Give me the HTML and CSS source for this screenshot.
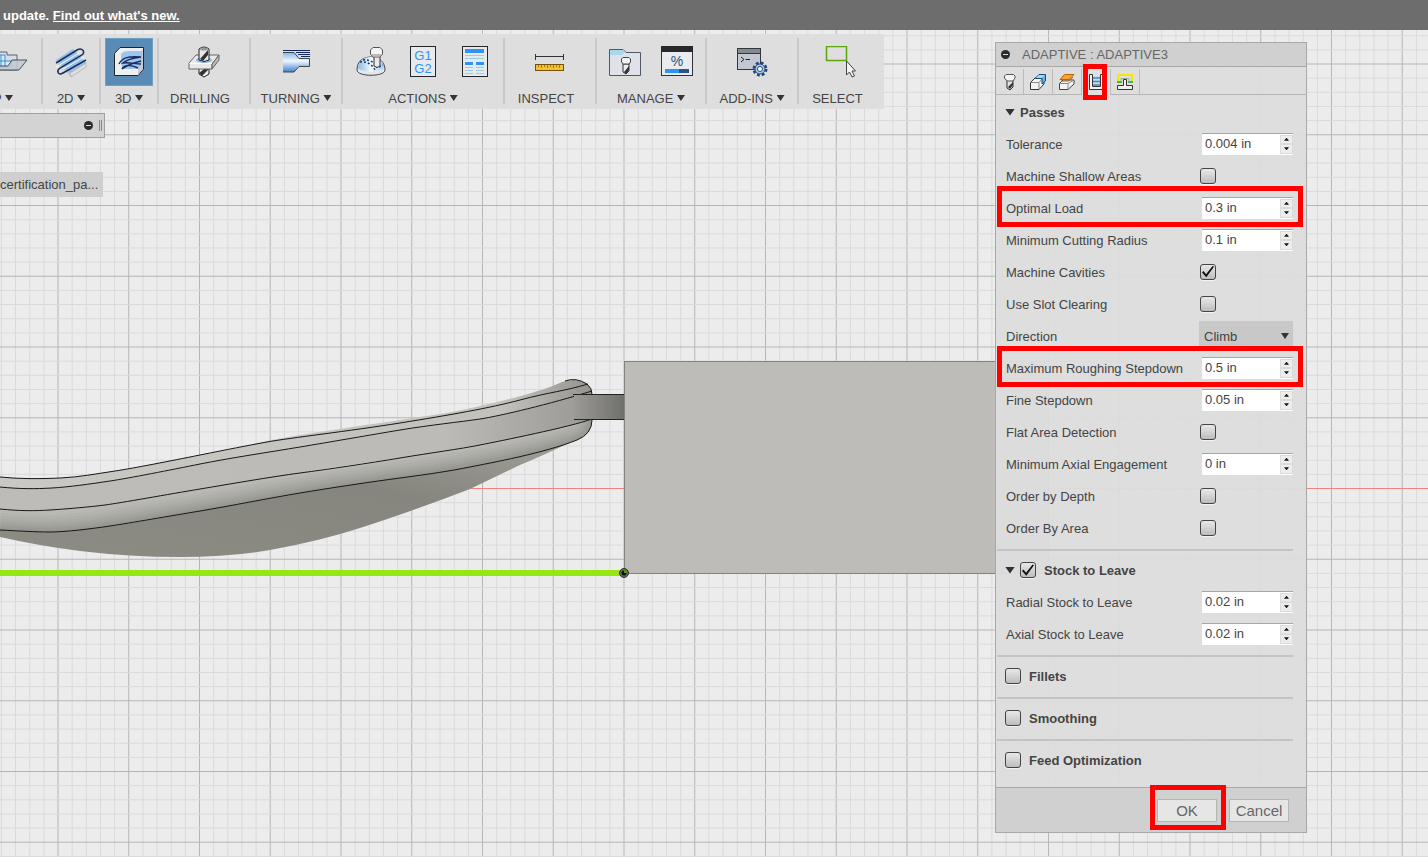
FILE: index.html
```html
<!DOCTYPE html>
<html lang="en">
<head>
    <meta charset="UTF-8">
    <meta name="viewport" content="width=device-width, initial-scale=1.0">
    <title>Adaptive : Adaptive3</title>
    <link rel="stylesheet" href="styles.css">
</head>
<body>
    <!-- Viewport with the model -->
    <svg class="scene" aria-hidden="true">
        <defs>
            <linearGradient id="face" x1="0" x2="1" y1="0" y2="0">
                <stop offset="0" stop-color="#bdbcb8"/><stop offset=".75" stop-color="#bcbbb7"/><stop offset="1" stop-color="#9a9994"/>
            </linearGradient>
            <linearGradient id="lip" x1="0" x2="1" y1="0" y2="0">
                <stop offset="0" stop-color="#c9c8c4"/><stop offset=".85" stop-color="#c2c1bc"/><stop offset="1" stop-color="#94938d"/>
            </linearGradient>
            <linearGradient id="belly" x1="0" x2="1" y1="1" y2="0">
                <stop offset="0" stop-color="#8c8c85"/><stop offset=".6" stop-color="#86867f"/><stop offset="1" stop-color="#a3a29b"/>
            </linearGradient>
            <linearGradient id="tab" x1="0" x2="1" y1="0" y2="0">
                <stop offset="0" stop-color="#9b9a96"/><stop offset="1" stop-color="#6f6f6c"/>
            </linearGradient>
            <path id="edge" d="M0 509 C20 511 35 511 50 510 S90 507 105 505 S170 494 200 489 S270 477 300 473 S370 463 400 458 S460 449 480 445 S570 427 592 419 Q592 434 577 440 C545 453 495 462 470 467 S425 474 400 478 S330 487 300 493 S230 506 200 511 S130 524 110 526 S70 531 50 532 S20 530 0 530Z"/>
            <path id="rim" d="M0 530 C20 531 35 532 50 532 S90 529 110 526 S170 516 200 511 S270 498 300 493 S370 482 400 478 S450 471 470 467 S545 453 577 440 Q592 434 592 420"/>
            <clipPath id="edge-clip"><use href="#edge"/></clipPath>
        </defs>
        <g id="grid"></g>
        <line x1="0" y1="488.5" x2="100%" y2="488.5" stroke="#f58080"/>

        <path fill="url(#belly)" d="M0 528 L50 531 L110 525 L300 492 L470 466 L584 434 Q570 444 520 465 L470 489 Q410 512 360 528 Q320 541 270 550 Q230 557 180 557 Q130 557 80 551 Q40 546 0 537Z"/>
        <use href="#edge" fill="#b9b8b3"/>
        <g clip-path="url(#edge-clip)" fill="none" stroke="#77766f" opacity=".8">
            <use href="#rim" stroke-width="34" opacity=".08"/>
            <use href="#rim" stroke-width="28" opacity=".09"/>
            <use href="#rim" stroke-width="22" opacity=".1"/>
            <use href="#rim" stroke-width="17" opacity=".12"/>
            <use href="#rim" stroke-width="12" opacity=".14"/>
            <use href="#rim" stroke-width="8" opacity=".16"/>
            <use href="#rim" stroke-width="4" opacity=".2"/>
        </g>
        <path fill="url(#face)" d="M0 487 C20 489 35 489 52 488 S90 484 110 481 S170 470 200 464 S270 452 300 447 S370 435 400 430 S460 422 480 419 S555 402 592 391 L592 419 C570 427 500 442 480 445 S430 454 400 458 S330 468 300 473 S230 484 200 489 S120 503 105 505 S65 510 50 510 S20 511 0 509Z"/>
        <path fill="url(#lip)" d="M0 477 C20 479 40 479 60 478 S95 474 115 471 S170 460 200 455 S245 446 267 441 S360 426 400 420 S450 413 480 406 S540 392 562 382 Q576 377 587 384 Q592 388 592 394 C560 402 500 416 480 419 S430 426 400 430 S330 442 300 447 S230 459 200 464 S130 478 110 481 S70 487 52 488 S20 489 0 487Z"/>
        <g fill="none" stroke="#171717">
            <path d="M0 477 C20 479 40 479 60 478 S95 474 115 471 S170 461 200 455 S245 446 267 442 S350 431 400 423 S490 408 520 400 S565 391 588 384"/>
            <path d="M0 487 C20 489 35 489 52 488 S90 484 110 481 S170 470 200 464 S270 452 300 447 S370 435 400 430 S460 422 480 419 S550 404 592 391"/>
            <path d="M0 509 C20 511 35 511 50 510 S90 507 105 505 S170 494 200 489 S270 477 300 473 S370 463 400 458 S460 449 480 445 S570 427 592 419"/>
            <use href="#rim"/>
            <path d="M565 381 Q576 377 587 384 Q592 388 592 394"/>
        </g>
        <path fill="url(#tab)" d="M574 394H625V420H574Z"/>
        <path fill="none" stroke="#222" d="M573 394.500H625M574 419.500H625"/>
        <rect x="624.500" y="361.500" width="424" height="212" fill="#bdbcb8" stroke="#82827e"/>
        <rect y="570" width="624" height="6" fill="#95e612"/>
        <circle cx="624" cy="573" r="4.500" fill="#66666a" stroke="#333"/>
        <circle cx="624" cy="573" r="2.500" fill="#111"/>
        <path d="M624 573V570A3 3 0 0 1 627 573Z" fill="#4f9a10"/>
    </svg>

    <div class="notice">update. <a href="#">Find out what's new.</a></div>

    <main class="workspace">
        <div class="left">
            <nav class="toolbar">
                <div class="group setup">
                    <div class="tools">
                        <button class="tool" aria-label="Setup">
                            <svg width="32" height="32" viewBox="0 0 32 32">
                                <path d="M0 6H8V9H18V24H0Z" fill="#d9dde4" stroke="#5b6470"/>
                                <path d="M0 9H6V15H12V21H0Z" fill="#d3ecfb" stroke="#3b8fca"/>
                                <path d="M0 15H6V21M2 9V21" stroke="#3b8fca" fill="none"/>
                                <path d="M13 14H28L20 24H0V20H9Z" fill="#c3c8d1" fill-opacity=".85" stroke="#4a525d"/>
                            </svg>
                        </button>
                    </div>
                    <span class="caption">SETUP <i class="arrow"></i></span>
                </div>
                <div class="group">
                    <div class="tools">
                        <button class="tool" aria-label="2D">
                            <svg width="32" height="32" viewBox="0 0 32 32">
                                <path d="M1 14L18 3L31 17V21L16 31L1 17Z" fill="#c9cbcd"/>
                                <path d="M1 14L18 3L31 17L15 27Z" fill="#94c0ea"/>
                                <path d="M15 27L31 17V21L16 31Z" fill="#dedede" stroke="#999" stroke-width=".5"/>
                                <path d="M1 17L22 4C27 1 31 6 27 9L5 22C1 25 3 30 8 27L31 14" fill="none" stroke="#1c2f63" stroke-width="1.500"/>
                                <path d="M1 21L24 7M8 23L29 11" fill="none" stroke="#f4f7fa"/>
                            </svg>
                        </button>
                    </div>
                    <span class="caption">2D <i class="arrow"></i></span>
                </div>
                <div class="group">
                    <div class="tools">
                        <button class="tool active" aria-label="3D">
                            <svg width="32" height="32" viewBox="0 0 32 32">
                                <path d="M1.500 7.500L7 1.500H30.500V23L25 29.500H1.500Z" fill="#eeeff1" stroke="#1d2530"/>
                                <path d="M25 9L30 3V23L25 29Z" fill="#c9cdd3"/>
                                <path d="M8 8Q10 5 15 5H29V17Q27 22 23 23H12Q8 22 8 18Z" fill="#9cc6ee"/>
                                <path d="M6 18C9 12 14 10 28 11C20 12 13 14 10 17C16 16 22 18 28 18" fill="none" stroke="#1b2c5e" stroke-width="1.400"/>
                                <path d="M9 23C11 19 17 18 25 22M9 23C14 19 20 17 28 15" fill="none" stroke="#1b2c5e" stroke-width="1.400"/>
                            </svg>
                        </button>
                    </div>
                    <span class="caption">3D <i class="arrow"></i></span>
                </div>
                <div class="group wide">
                    <div class="tools">
                        <button class="tool" aria-label="Drilling">
                            <svg width="32" height="32" viewBox="0 0 32 32">
                                <path d="M11 20H21V28L16 31L11 28Z" fill="#eee" stroke="#222"/>
                                <path d="M11 27L20 20H21V23L14 30Z" fill="#333"/>
                                <path d="M1 17L8 9H31L24 18V23H1Z" fill="#e9e9ea" stroke="#666"/>
                                <path d="M24 18L31 9V14L24 23Z" fill="#bbb" stroke="#666"/>
                                <path d="M1.500 17.500H24" stroke="#fff"/>
                                <ellipse cx="16" cy="14" rx="8" ry="3" fill="#82b5ea"/>
                                <path d="M11 3Q16 -1 21 3V14Q16 17 11 14Z" fill="#e8e8e8" stroke="#222"/>
                                <path d="M12 13L20 4V9L15 15Z" fill="#333"/>
                                <ellipse cx="16" cy="3" rx="4" ry="1.500" fill="#999"/>
                            </svg>
                        </button>
                    </div>
                    <span class="caption plain">DRILLING</span>
                </div>
                <div class="group wide">
                    <div class="tools">
                        <button class="tool" aria-label="Turning">
                            <svg width="32" height="32" viewBox="0 0 32 32">
                                <defs><linearGradient id="bar" x1="0" x2="0" y1="0" y2="1"><stop offset="0" stop-color="#7ab2ea"/><stop offset=".45" stop-color="#f1f7fd"/><stop offset="1" stop-color="#3b82cf"/></linearGradient></defs>
                                <path d="M3 6H14L19 12H29V20H19L14 26H3Z" fill="url(#bar)"/>
                                <path d="M3 6.500H14L19 12.500H29.500V20.500H19L14 26H3" fill="none" stroke="#41464c"/>
                                <path d="M3 4.500H30M16 6.500H30M18 8.500H30M21 10.500H30" stroke="#14295e"/>
                            </svg>
                        </button>
                    </div>
                    <span class="caption">TURNING <i class="arrow"></i></span>
                </div>
                <div class="group">
                    <div class="tools">
                        <button class="tool" aria-label="Simulate">
                            <svg width="32" height="32" viewBox="0 0 32 32">
                                <defs><linearGradient id="dome" x1="0" x2="1" y1="0" y2="0"><stop offset="0" stop-color="#8abbe8"/><stop offset=".5" stop-color="#f4f9fd"/><stop offset="1" stop-color="#a9cdee"/></linearGradient></defs>
                                <path d="M2 24C2 15 8 11 16 11S30 16 30 24C30 31 2 31 2 24Z" fill="#e6e7e9" stroke="#3f444b"/>
                                <path d="M3 22C4 14 9 11 16 11S28 15 29 22C24 27 8 27 3 22Z" fill="url(#dome)"/>
                                <path d="M5 16C11 15 17 18 20 24M8 14C15 13 20 17 22 22M24 21L28 19" fill="none" stroke="#1b3a70" stroke-width="1.500" stroke-dasharray="2 2"/>
                                <path d="M19 10H25V20Q22 23 19 20Z" fill="#e9e9e9" stroke="#333"/>
                                <path d="M15.500 4L18 1.500H25L27.500 4V8L25 11H18L15.500 8Z" fill="#f4f4f4" stroke="#555"/>
                                <path d="M16 8H27L25 10.500H18Z" fill="#bbb"/>
                            </svg>
                        </button>
                        <button class="tool" aria-label="Post process">
                            <svg width="32" height="32" viewBox="0 0 32 32">
                                <rect x="3.500" y=".5" width="25" height="30" fill="#e6eaee" stroke="#23272c"/>
                                <text class="gcode" x="16" y="14" text-anchor="middle">G1</text>
                                <text class="gcode" x="16" y="27" text-anchor="middle">G2</text>
                            </svg>
                        </button>
                        <button class="tool" aria-label="Setup sheet">
                            <svg width="32" height="32" viewBox="0 0 32 32">
                                <rect x="3.500" y=".5" width="25" height="30" fill="#e6eaee" stroke="#23272c"/>
                                <path d="M6 3H25V7H6ZM6 16H14V19H6ZM17 16H25V19H17Z" fill="#2f93f5"/>
                                <path d="M6 9.500H25M6 12.500H25M6 21.500H14M6 24.500H14M6 27.500H14M17 21.500H25M17 24.500H25M17 27.500H25" stroke="#9ccbe0"/>
                            </svg>
                        </button>
                    </div>
                    <span class="caption">ACTIONS <i class="arrow"></i></span>
                </div>
                <div class="group wide">
                    <div class="tools">
                        <button class="tool" aria-label="Inspect">
                            <svg width="32" height="32" viewBox="0 0 32 32">
                                <path d="M1.500 8V14M29.500 8V14M1 10.500H30" stroke="#333"/>
                                <rect x="1.500" y="18.500" width="28" height="6" fill="#f2c235" stroke="#7a4e0b"/>
                                <path d="M4.500 19V21M7.500 19V22M10.500 19V21M13.500 19V22M16.500 19V21M19.500 19V22M22.500 19V21M25.500 19V22" stroke="#a8761a"/>
                            </svg>
                        </button>
                    </div>
                    <span class="caption plain">INSPECT</span>
                </div>
                <div class="group">
                    <div class="tools">
                        <button class="tool" aria-label="Tool library">
                            <svg width="32" height="32" viewBox="0 0 32 32">
                                <path d="M.5 3.500H14L17 6.500H31.500V29.500H.5Z" fill="#dfe2e8" stroke="#4f5966"/>
                                <path d="M1 4H14L16 6L13 9H1Z" fill="#a9d8ee"/>
                                <path d="M14 18H20V25L17 28L14 26Z" fill="#eee" stroke="#333"/>
                                <path d="M15 26L20 20V24L17 28Z" fill="#333"/>
                                <path d="M12.500 13L14 11.500H20L21.500 13V16L20 18H14L12.500 16Z" fill="#f6f6f6" stroke="#444"/>
                            </svg>
                        </button>
                        <button class="tool" aria-label="Task manager">
                            <svg width="32" height="32" viewBox="0 0 32 32">
                                <rect x=".5" y=".5" width="31" height="29" fill="#e9ebef" stroke="#30343a"/>
                                <rect width="32" height="6" fill="#26282c"/>
                                <text class="percent" x="16" y="20" text-anchor="middle">%</text>
                                <rect x="4" y="23" width="15" height="4" fill="#2f93f5"/>
                                <rect x="18" y="23" width="10" height="4" fill="#2b5681"/>
                            </svg>
                        </button>
                    </div>
                    <span class="caption">MANAGE <i class="arrow"></i></span>
                </div>
                <div class="group wide">
                    <div class="tools">
                        <button class="tool" aria-label="Add-ins">
                            <svg width="32" height="32" viewBox="0 0 32 32">
                                <rect x="1.500" y="2.500" width="23" height="21" fill="#c3c9d3" stroke="#34383e"/>
                                <rect x="2" y="3" width="22" height="4" fill="#858a91"/>
                                <path d="M1 7.500H25" stroke="#34383e"/>
                                <path d="M5 11L8 13.500L5 16M9.500 13.500H14" fill="none" stroke="#222"/>
                                <circle cx="24" cy="23" r="6" fill="none" stroke="#23477c" stroke-width="3" stroke-dasharray="2.700 2"/>
                                <circle cx="24" cy="23" r="5" fill="#a9c8ec" stroke="#23477c"/>
                                <circle cx="24" cy="23" r="2.500" fill="#fff" stroke="#23477c"/>
                            </svg>
                        </button>
                    </div>
                    <span class="caption">ADD-INS <i class="arrow"></i></span>
                </div>
                <div class="group select">
                    <div class="tools">
                        <button class="tool" aria-label="Select">
                            <svg width="36" height="32" viewBox="0 0 36 32">
                                <rect x="2.500" y=".5" width="20" height="14" fill="none" stroke="#5ea50f" stroke-width="1.500"/>
                                <path d="M22.500 15V29L25.500 26L28 31L30.500 30L28 25H31.500Z" fill="#f3f3f3" stroke="#444"/>
                            </svg>
                        </button>
                    </div>
                    <span class="caption plain">SELECT</span>
                </div>
            </nav>

            <div class="browser-bar">
                <button class="minus" aria-label="Collapse browser"></button>
                <span class="grip"></span>
            </div>
            <div class="node">certification_pa...</div>
        </div>

        <form class="panel">
            <header class="panel-head">
                <button type="button" class="minus" aria-label="Collapse"></button>
                <h1>ADAPTIVE : ADAPTIVE3</h1>
            </header>
            <div class="tabs">
                <button type="button" class="tab" aria-label="Tool">
                    <svg width="18" height="18" viewBox="0 0 18 18">
                        <path d="M6 7H12V14L9 17L6 15Z" fill="#e4e4e4" stroke="#333"/>
                        <path d="M7 14L12 9V12L9 16Z" fill="#333"/>
                        <path d="M3.500 3L5 1.500H12.500L14 3V5L12 8H6L3.500 5Z" fill="#f5f5f5" stroke="#555"/>
                    </svg>
                </button>
                <button type="button" class="tab" aria-label="Geometry">
                    <svg width="18" height="18" viewBox="0 0 18 18">
                        <path d="M1.500 9.500L6 5H13L15 8V11L10 16.500H1.500Z" fill="#f4f4f4" stroke="#333"/>
                        <path d="M1.500 9.500H10V16M10 9.500L13 6" fill="none" stroke="#888"/>
                        <path d="M6.500 5L10 1.500H16.500V8L13 11V5.500H6.500Z" fill="#5fb2ea" stroke="#124c80"/>
                        <path d="M7 5L10 2H16L13 5Z" fill="#a5d6f5"/>
                    </svg>
                </button>
                <button type="button" class="tab" aria-label="Heights">
                    <svg width="18" height="18" viewBox="0 0 18 18">
                        <path d="M1.500 10.500L5 7H16V11L10 16.500H1.500Z" fill="#f4f4f4" stroke="#444"/>
                        <path d="M1.500 10.500H10V16M10 10.500L16 7" fill="none" stroke="#888"/>
                        <path d="M2 6.500H11L16 1.500H6.500Z" fill="#ffa12e" stroke="#b7620a"/>
                        <path d="M3 8H11L15 4" fill="none" stroke="#b7620a"/>
                    </svg>
                </button>
                <button type="button" class="tab current marked" aria-label="Passes">
                    <svg width="18" height="18" viewBox="0 0 18 18">
                        <path d="M2.500 1.500H5.500V13.500H13.500V1.500H16.500V16.500H2.500Z" fill="#f4f4f4" stroke="#333"/>
                        <path d="M6 3H13V13H6Z" fill="#c6dcf2"/>
                        <path d="M6 5H13M6 8.500H13M6 12H13" stroke="#4a83c4" stroke-width="1.500"/>
                    </svg>
                </button>
                <button type="button" class="tab" aria-label="Linking">
                    <svg width="18" height="18" viewBox="0 0 18 18">
                        <path d="M2 8V2H16V8" fill="none" stroke="#f6e600" stroke-width="2"/>
                        <path d="M1 9H6M12 9H17" fill="none" stroke="#49b04f" stroke-width="2"/>
                        <path d="M5 9V5.500H13V9" fill="none" stroke="#8fb08f"/>
                        <path d="M1.500 12.500H7.500V6.500H10.500V12.500H16.500V16.500H1.500Z" fill="#f1f1f1" stroke="#333"/>
                    </svg>
                </button>
            </div>

            <div class="settings">
                <h2 class="section"><i class="arrow"></i> Passes</h2>
                <div class="row"><label for="tolerance">Tolerance</label>
                    <span class="spin"><input type="text" id="tolerance" value="0.004 in"><span class="steps"><button type="button" class="up" aria-label="Increase"></button><button type="button" class="down" aria-label="Decrease"></button></span></span></div>
                <div class="row"><label for="shallow">Machine Shallow Areas</label><input type="checkbox" id="shallow"></div>
                <div class="row marked"><label for="load">Optimal Load</label>
                    <span class="spin"><input type="text" id="load" value="0.3 in"><span class="steps"><button type="button" class="up" aria-label="Increase"></button><button type="button" class="down" aria-label="Decrease"></button></span></span></div>
                <div class="row"><label for="radius">Minimum Cutting Radius</label>
                    <span class="spin"><input type="text" id="radius" value="0.1 in"><span class="steps"><button type="button" class="up" aria-label="Increase"></button><button type="button" class="down" aria-label="Decrease"></button></span></span></div>
                <div class="row"><label for="cavities">Machine Cavities</label><input type="checkbox" id="cavities" checked></div>
                <div class="row"><label for="slot">Use Slot Clearing</label><input type="checkbox" id="slot"></div>
                <div class="row"><label for="direction">Direction</label>
                    <span class="drop"><select id="direction"><option>Climb</option><option>Conventional</option></select><i class="arrow"></i></span></div>
                <div class="row marked"><label for="stepdown">Maximum Roughing Stepdown</label>
                    <span class="spin"><input type="text" id="stepdown" value="0.5 in"><span class="steps"><button type="button" class="up" aria-label="Increase"></button><button type="button" class="down" aria-label="Decrease"></button></span></span></div>
                <div class="row"><label for="fine">Fine Stepdown</label>
                    <span class="spin"><input type="text" id="fine" value="0.05 in"><span class="steps"><button type="button" class="up" aria-label="Increase"></button><button type="button" class="down" aria-label="Decrease"></button></span></span></div>
                <div class="row"><label for="flat">Flat Area Detection</label><input type="checkbox" id="flat"></div>
                <div class="row"><label for="axial">Minimum Axial Engagement</label>
                    <span class="spin"><input type="text" id="axial" value="0 in"><span class="steps"><button type="button" class="up" aria-label="Increase"></button><button type="button" class="down" aria-label="Decrease"></button></span></span></div>
                <div class="row"><label for="depth">Order by Depth</label><input type="checkbox" id="depth"></div>
                <div class="row"><label for="area">Order By Area</label><input type="checkbox" id="area"></div>
                <hr>
                <div class="section"><i class="arrow"></i><input type="checkbox" id="stock" checked><label for="stock">Stock to Leave</label></div>
                <div class="row"><label for="radial">Radial Stock to Leave</label>
                    <span class="spin"><input type="text" id="radial" value="0.02 in"><span class="steps"><button type="button" class="up" aria-label="Increase"></button><button type="button" class="down" aria-label="Decrease"></button></span></span></div>
                <div class="row"><label for="axialstock">Axial Stock to Leave</label>
                    <span class="spin"><input type="text" id="axialstock" value="0.02 in"><span class="steps"><button type="button" class="up" aria-label="Increase"></button><button type="button" class="down" aria-label="Decrease"></button></span></span></div>
                <hr>
                <div class="section"><input type="checkbox" id="fillets"><label for="fillets">Fillets</label></div>
                <hr>
                <div class="section"><input type="checkbox" id="smoothing"><label for="smoothing">Smoothing</label></div>
                <hr>
                <div class="section"><input type="checkbox" id="feed"><label for="feed">Feed Optimization</label></div>
            </div>

            <footer class="panel-foot">
                <button type="button" class="btn marked">OK</button>
                <button type="button" class="btn">Cancel</button>
            </footer>
        </form>
    </main>

    <script>
        // Construction grid: every fifth line is heavier
        const grid = document.getElementById('grid');
        const step = 14.15;

        function addLine(x1, y1, x2, y2, major) {
            const line = document.createElementNS('http://www.w3.org/2000/svg', 'line');
            line.setAttribute('x1', x1);
            line.setAttribute('y1', y1);
            line.setAttribute('x2', x2);
            line.setAttribute('y2', y2);
            line.setAttribute('class', major ? 'major' : 'minor');
            grid.appendChild(line);
        }

        function drawGrid() {
            const w = window.innerWidth;
            const h = window.innerHeight;
            grid.innerHTML = '';
            for (let i = -4; 58 + i * step < w; i++) {
                addLine(58 + i * step, 0, 58 + i * step, h, i % 5 === 0);
            }
            for (let i = -4; 64 + i * step < h; i++) {
                addLine(0, 64 + i * step, w, 64 + i * step, i % 5 === 0);
            }
        }

        drawGrid();
        window.addEventListener('resize', drawGrid);
    </script>
</body>
</html>
```

FILE: styles.css
```css
* {
    box-sizing: border-box;
}

body {
    margin: 0;
    height: 100vh;
    overflow: hidden;
    background: #ececec;
    color: #444;
    font-family: "Liberation Sans", Arial, sans-serif;
    font-size: 13px;
}

button, input, select {
    font: inherit;
    color: inherit;
    margin: 0;
    padding: 0;
    border: none;
    background: none;
}

/* Model view */
.scene {
    position: absolute;
    inset: 0;
    width: 100%;
    height: 100%;
    z-index: -1;
}

.minor {
    stroke: #dadada;
}

.major {
    stroke: #b6b6b6;
}

/* Top message */
.notice {
    height: 30px;
    padding-left: 3px;
    line-height: 31px;
    background: #6d6d6d;
    color: #fff;
    font-weight: bold;
}

.notice a {
    color: #fff;
}

.workspace {
    display: flex;
    justify-content: space-between;
    align-items: flex-start;
}

/* Toolbar */
.toolbar {
    display: flex;
    height: 75px;
    margin-top: 4px;
    padding: 4px 0 5px;
    background: #dedede;
}

.group {
    display: flex;
    flex-direction: column;
    align-items: center;
    padding: 0 4px;
    border-left: 2px solid #c9c9c9;
}

.group.wide {
    width: 92px;
}

.group.select {
    width: 87px;
}

/* first group runs off the left edge of the window */
.group.setup {
    width: 41px;
    border: none;
    padding: 0 28px 0 0;
    align-items: flex-end;
    overflow-x: clip;
}

.setup .tools {
    margin-right: -26px;
}

.tools {
    display: flex;
    gap: 4px;
}

.tool {
    display: flex;
    justify-content: center;
    align-items: center;
    width: 48px;
    height: 48px;
}

.tool.active {
    background: #5a8bb5;
    border: 1px solid #6ea0cb;
}

.gcode {
    font-size: 13px;
    fill: #2f93f5;
}

.percent {
    font-size: 14px;
    fill: #2b5681;
}

.caption {
    margin-top: 4px;
    line-height: 18px;
    white-space: nowrap;
}

.caption.plain {
    padding-right: 8px;
}

.arrow {
    display: inline-block;
    width: 8px;
    height: 6px;
    background: #333;
    clip-path: polygon(0 0, 100% 0, 50% 100%);
}

.caption .arrow {
    margin-bottom: 2px;
}

/* Browser strip */
.browser-bar {
    display: flex;
    justify-content: flex-end;
    align-items: center;
    gap: 6px;
    width: 105px;
    height: 25px;
    margin-top: 4px;
    padding-right: 2px;
    background: #d3d3d3;
    border: 1px solid #a0a0a0;
    border-left: none;
}

.minus {
    display: flex;
    justify-content: center;
    align-items: center;
    width: 9px;
    height: 9px;
    border-radius: 50%;
    background: #2b2b2b;
}

.minus::before {
    content: "";
    width: 5px;
    height: 1px;
    background: #ddd;
}

.grip {
    width: 3px;
    height: 11px;
    border: solid #888;
    border-width: 0 1px;
}

.node {
    width: 103px;
    height: 25px;
    margin-top: 34px;
    line-height: 25px;
    background: #cfcfcf;
}

/* Operation panel */
.panel {
    width: 312px;
    margin: 12px 121px 0 0;
    background: rgba(221, 221, 221, .97);
    border: 1px solid #a8a8a8;
}

.panel-head {
    display: flex;
    align-items: center;
    gap: 12px;
    height: 24px;
    padding-left: 5px;
    background: #d0d0d0;
    border-bottom: 1px solid #a8a8a8;
}

.panel-head h1 {
    margin: 0;
    font-size: 13px;
    font-weight: normal;
    color: #666;
}

.tabs {
    display: flex;
    height: 28px;
    border-bottom: 1px solid #b5b5b5;
}

.tab {
    display: flex;
    justify-content: center;
    align-items: center;
    width: 29px;
    height: 25px;
    margin-top: 2px;
    border-right: 1px solid #bbb;
}

.tab:first-child {
    width: 28px;
}

.tab.current {
    height: 26px;
    background: #e0e0e0;
}

.settings {
    padding-bottom: 11px;
}

.section {
    display: flex;
    align-items: center;
    gap: 5px;
    height: 32px;
    margin: 0;
    padding-left: 9px;
    font-size: 13px;
    font-weight: bold;
}

.section .arrow {
    width: 10px;
    height: 7px;
}

.section label {
    margin-left: 3px;
    padding-top: 1px;
}

h2.section {
    height: 33px;
    padding-top: 1px;
}

.row {
    display: grid;
    grid-template-columns: 1fr 94px;
    align-items: center;
    height: 32px;
    padding: 0 13px 0 10px;
}

.row label {
    padding-top: 1px;
}

hr {
    height: 2px;
    margin: 5px 13px 3px 1px;
    border: none;
    background: #c4c4c4;
}

/* Fields */
.spin {
    display: flex;
    height: 22px;
    margin: 0 0 1px 3px;
    background: #fff;
    border-top: 1px solid #a5a5ad;
}

.spin input {
    flex: 1;
    min-width: 0;
    padding: 0 0 1px 3px;
}

.steps {
    display: flex;
    flex-direction: column;
    width: 13px;
    padding: 1px 0;
}

.steps button {
    display: flex;
    justify-content: center;
    align-items: center;
    flex: 1;
    background: #ececec;
    border: 1px solid #dcdcdc;
}

.steps button::before {
    content: "";
    width: 5px;
    height: 3px;
    background: #111;
    clip-path: polygon(50% 0, 100% 100%, 0 100%);
}

.steps .down::before {
    clip-path: polygon(0 0, 100% 0, 50% 100%);
}

input[type="checkbox"] {
    appearance: none;
    width: 16px;
    height: 16px;
    border: 1px solid #444;
    border-radius: 3px;
    background: linear-gradient(#e8e8e8, #bdbdbd);
    box-shadow: 0 1px 0 #f2f2f2;
}

.row input[type="checkbox"] {
    margin: 0 0 1px 1px;
}

input[type="checkbox"]:checked::before {
    content: "";
    display: block;
    width: 12px;
    height: 12px;
    margin: 1px;
    background: #111;
    clip-path: polygon(0 58%, 12% 46%, 34% 72%, 88% 4%, 100% 10%, 36% 98%);
}

.drop {
    display: flex;
    align-items: center;
    height: 30px;
    padding: 0 4px 0 5px;
    background: #c8c8c8;
}

.drop select {
    appearance: none;
    flex: 1;
}

/* Footer buttons */
.panel-foot {
    display: flex;
    justify-content: flex-end;
    gap: 12px;
    padding: 11px 17px 10px 0;
    background: #d0d0d0;
    border-top: 1px solid #a8a8a8;
}

.btn {
    width: 60px;
    height: 23px;
    background: #e6e6e6;
    border: 1px solid #b5b5b5;
    color: #666;
    font-size: 15px;
}

/* Red callouts */
.marked {
    position: relative;
}

.marked::after {
    content: "";
    position: absolute;
    inset: -6px 3px -3px 1px;
    border: 5px solid #f00;
    pointer-events: none;
}

.tab.marked::after {
    inset: -5px 3px -5px 1px;
}

.btn.marked::after {
    inset: -15px -10px -9px -8px;
}
```
